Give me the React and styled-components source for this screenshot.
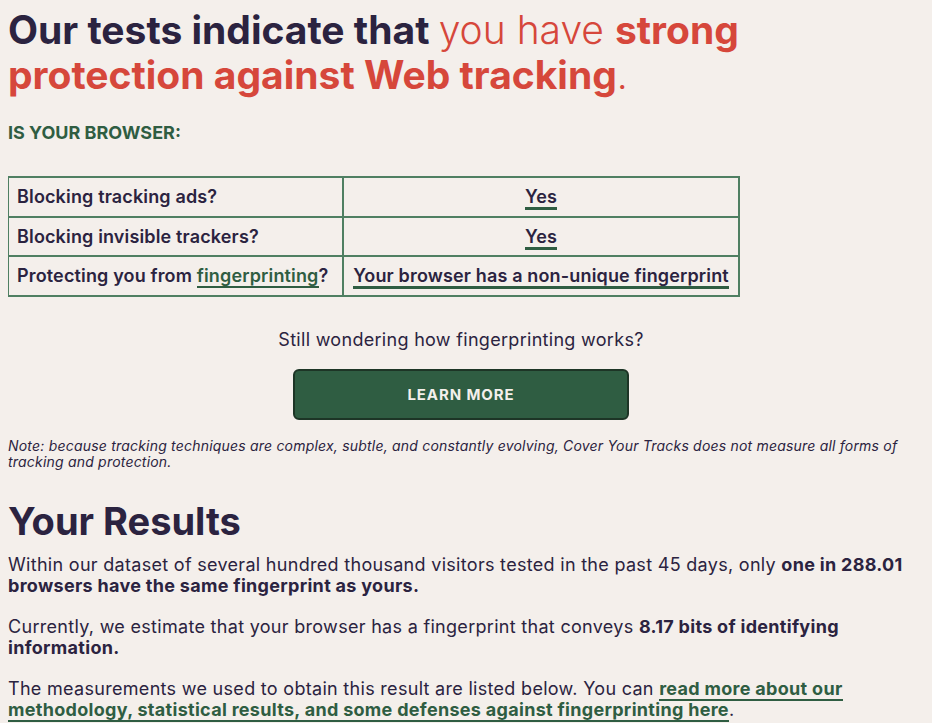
import styled, { createGlobalStyle } from "styled-components";

const GlobalStyle = createGlobalStyle`
  body {
    margin: 8px;
    background-color: #f4efeb;
    color: #2b2340;
    font-family: Inter, "Open Sans", sans-serif;
  }
`;

const Page = styled.div`
  max-width: 906px;
`;

const Headline = styled.h1`
  font-size: 39px;
  line-height: 45px;
  font-weight: 700;
  margin: -1px 0 25px;
  max-width: 760px;
`;

const Red = styled.span`
  color: #d6473b;
  font-weight: ${(p) => (p.$bold ? 700 : 300)};
`;

const Eyebrow = styled.h3`
  font-size: 18px;
  font-weight: 700;
  color: #2f5d42;
  text-transform: uppercase;
  margin: 0 0 33px;
`;

const Table = styled.table`
  border-collapse: collapse;
  width: 733px;
  margin-left: -1px;
`;

const Cell = styled.td`
  border: 2px solid #4f7f62;
  padding: 8px 8px;
  height: 21.5px;
  font-size: 18px;
  font-weight: 600;
  letter-spacing: 0.15px;
  text-align: ${(p) => (p.$center ? "center" : "left")};
  width: ${(p) => p.$w || "auto"};
  white-space: nowrap;
`;

const Link = styled.a`
  color: ${(p) => (p.$green ? "#2f5d42" : "#2b2340")};
  text-decoration: none;
  border-bottom: ${(p) => (p.$thick ? "3px" : "2px")} solid #2f5d42;
`;

const Prompt = styled.p`
  text-align: center;
  font-size: 18px;
  letter-spacing: 0.3px;
  margin: 32px 0 19px;
`;

const ButtonRow = styled.div`
  display: flex;
  justify-content: center;
`;

const Button = styled.button`
  width: 336px;
  height: 51px;
  background-color: #2f5d42;
  border: 2px solid #1d3526;
  border-radius: 6px;
  color: #f4efeb;
  font-family: inherit;
  font-size: 15px;
  font-weight: 700;
  letter-spacing: 0.9px;
  cursor: pointer;
`;

const Note = styled.p`
  font-size: 14px;
  line-height: 16px;
  letter-spacing: 0.2px;
  font-style: italic;
  margin: 18px 0 29px;
`;

const Results = styled.h2`
  font-size: 38px;
  line-height: 44px;
  font-weight: 700;
  margin: 0 0 11px;
`;

const Para = styled.p`
  font-size: 18px;
  line-height: 21px;
  letter-spacing: 0.3px;
  margin: 0 0 20px;
`;

export default function App() {
  return (
    <Page>
      <GlobalStyle />
      <Headline>
        Our tests indicate that <Red>you have </Red>
        <Red $bold>strong protection against Web tracking</Red>
        <Red>.</Red>
      </Headline>
      <Eyebrow>Is your browser:</Eyebrow>
      <Table>
        <tbody>
          <tr>
            <Cell $w="317px">Blocking tracking ads?</Cell>
            <Cell $center><Link $thick>Yes</Link></Cell>
          </tr>
          <tr>
            <Cell>Blocking invisible trackers?</Cell>
            <Cell $center><Link $thick>Yes</Link></Cell>
          </tr>
          <tr>
            <Cell>
              Protecting you from <Link $green>fingerprinting</Link>?
            </Cell>
            <Cell $center>
              <Link $thick>Your browser has a non-unique fingerprint</Link>
            </Cell>
          </tr>
        </tbody>
      </Table>
      <Prompt>Still wondering how fingerprinting works?</Prompt>
      <ButtonRow>
        <Button>LEARN MORE</Button>
      </ButtonRow>
      <Note>
        Note: because tracking techniques are complex, subtle, and constantly
        evolving, Cover Your Tracks does not measure all forms of tracking and
        protection.
      </Note>
      <Results>Your Results</Results>
      <Para>
        Within our dataset of several hundred thousand visitors tested in the
        past 45 days, only <b>one in 288.01 browsers have the same fingerprint as yours.</b>
      </Para>
      <Para>
        Currently, we estimate that your browser has a fingerprint that conveys{" "}
        <b>8.17 bits of identifying information.</b>
      </Para>
      <Para>
        The measurements we used to obtain this result are listed below. You
        can{" "}
        <Link $green>
          <b>read more about our methodology, statistical results, and some defenses against fingerprinting here</b>
        </Link>
        .
      </Para>
    </Page>
  );
}
